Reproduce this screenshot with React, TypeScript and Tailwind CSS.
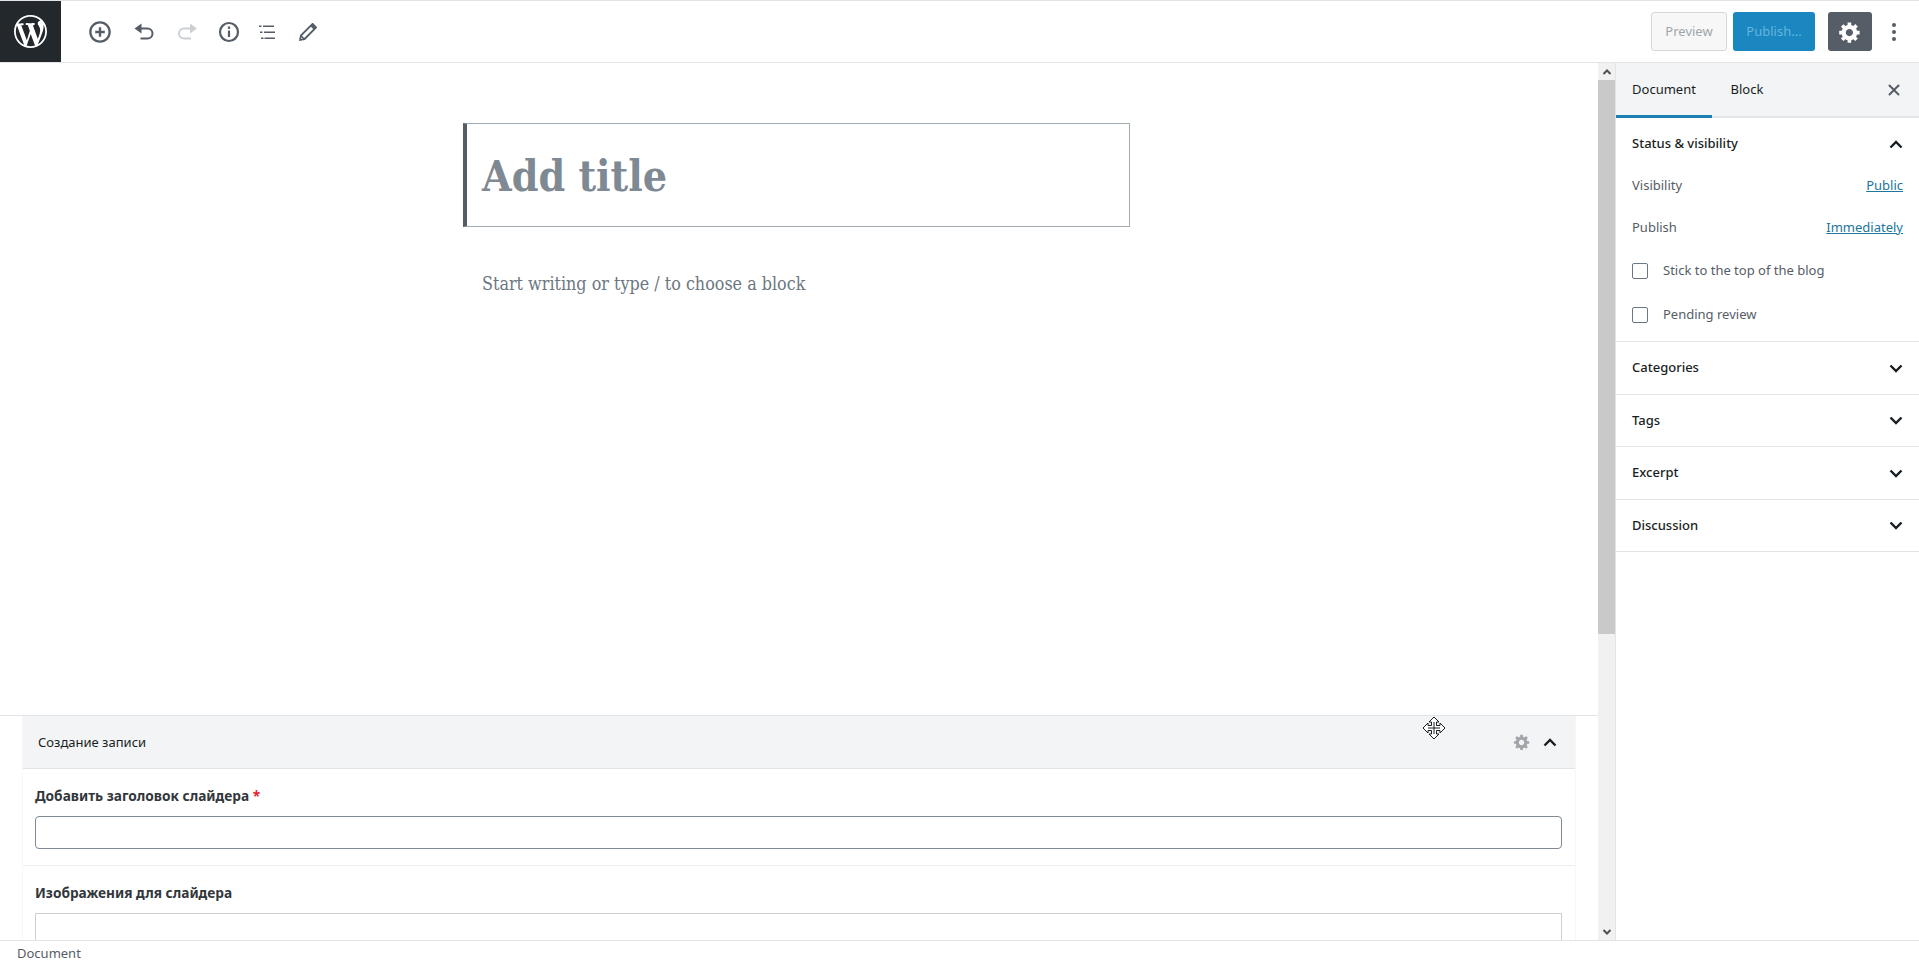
import { X } from "lucide-react"

const GEAR = "M18 12h-2.18c-.17.7-.44 1.35-.81 1.93l1.54 1.54-2.1 2.1-1.54-1.54c-.58.36-1.23.63-1.91.79V19H8v-2.18c-.68-.16-1.33-.43-1.91-.79l-1.54 1.54-2.12-2.12 1.54-1.54c-.36-.58-.63-1.23-.79-1.91H1V9.03h2.17c.16-.7.44-1.35.8-1.94L2.43 5.55l2.1-2.1 1.54 1.54c.58-.37 1.24-.64 1.93-.81V2h3v2.18c.68.16 1.33.43 1.91.79l1.54-1.54 2.12 2.12-1.54 1.54c.36.59.64 1.24.8 1.94H18V12zm-8.5 1.5c1.66 0 3-1.34 3-3s-1.34-3-3-3-3 1.34-3 3 1.34 3 3 3z"

function WpLogo() {
  return (
    <svg width="33" height="33" viewBox="0 0 20 20" fill="#fff">
      <path d="M20 10c0-5.51-4.49-10-10-10C4.48 0 0 4.49 0 10c0 5.52 4.48 10 10 10 5.51 0 10-4.48 10-10zM7.78 15.37L4.37 6.22c.55-.02 1.17-.08 1.17-.08.5-.06.44-1.13-.06-1.11 0 0-1.45.11-2.37.11-.18 0-.37 0-.58-.01C4.12 2.69 6.87 1.11 10 1.11c2.33 0 4.45.87 6.05 2.34-.68-.11-1.65.39-1.65 1.58 0 .74.45 1.36.9 2.1.35.61.55 1.36.55 2.46 0 1.49-1.4 5-1.4 5l-3.03-8.37c.54-.02.82-.17.82-.17.5-.05.44-1.25-.06-1.22 0 0-1.44.12-2.38.12-.87 0-2.33-.12-2.33-.12-.5-.03-.56 1.2-.06 1.22l.92.08 1.26 3.41zM17.41 10c.24-.64.74-1.87.43-4.25.7 1.29 1.05 2.71 1.05 4.25 0 3.29-1.73 6.24-4.4 7.78.97-2.59 1.94-5.2 2.92-7.78zM6.1 18.09C3.12 16.65 1.11 13.53 1.11 10c0-1.3.23-2.48.72-3.59C3.25 10.3 4.67 14.2 6.1 18.09zm4.03-6.63l2.58 6.98c-.86.29-1.76.45-2.71.45-.79 0-1.57-.11-2.29-.33.81-2.38 1.62-4.74 2.42-7.1z" />
    </svg>
  )
}

function Chevron({ up, size = 24, color = "#191e23" }: { up?: boolean; size?: number; color?: string }) {
  return (
    <svg width={size} height={size} viewBox="0 0 24 24" fill="none" stroke={color} strokeWidth="2.4">
      <path d={up ? "M6.5 15.5L12 10l5.500 5.500" : "M6.5 9.5L12 15l5.500-5.500"} />
    </svg>
  )
}

function Toolbar() {
  return (
    <div className="flex items-center ml-[17px] text-[#555d66]">
      <button className="w-[44px] h-[44px] flex items-center justify-center">
        <svg width="24" height="24" viewBox="0 0 20 20" fill="#555d66"><path d="M10 1c-5 0-9 4-9 9s4 9 9 9 9-4 9-9-4-9-9-9zm0 16c-3.9 0-7-3.1-7-7s3.1-7 7-7 7 3.1 7 7-3.1 7-7 7zm1-11H9v3H6v2h3v3h2v-3h3V9h-3V6z" /></svg>
      </button>
      <button className="w-[44px] h-[44px] flex items-center justify-center">
        <svg width="24" height="24" viewBox="0 0 24 24" fill="none" stroke="#555d66" strokeWidth="2">
          <path d="M2.500 8.500L9.500 3.500V13.500Z" fill="#555d66" stroke="none" />
          <path d="M8.500 8.500h7a5 5 0 0 1 0 10H8.500" />
        </svg>
      </button>
      <button className="w-[44px] h-[44px] flex items-center justify-center">
        <svg width="24" height="24" viewBox="0 0 24 24" fill="none" stroke="#ccd0d4" strokeWidth="2">
          <path d="M21 8.500L14 3.500V13.500Z" fill="#ccd0d4" stroke="none" />
          <path d="M15 8.500H8a5 5 0 0 0 0 10h7" />
        </svg>
      </button>
      <button className="w-[38px] h-[44px] flex items-center justify-center">
        <svg width="24" height="24" viewBox="0 0 24 24" fill="none" stroke="#555d66" strokeWidth="2.2">
          <circle cx="12" cy="12" r="9" />
          <path d="M12 10.500v6.500" />
          <path d="M12 6.500v2.400" />
        </svg>
      </button>
      <button className="w-[38px] h-[44px] flex items-center justify-center">
        <svg width="24" height="24" viewBox="0 0 24 24" fill="#555d66">
          <path d="M4 5.500h2.500V7H4zM8 5.500h11V7H8zM5 11.500h2.500V13H5zM9 11.500h11V13H9zM6 17.500h2.500V19H6zM9.500 17.500H20V19H9.500z" />
        </svg>
      </button>
      <button className="w-[44px] h-[44px] flex items-center justify-center">
        <svg width="24" height="24" viewBox="0 0 24 24" fill="#555d66">
          <path d="M17.500 3.500l3 3c.6.6.6 1.300.1 1.800L9 19.900 3 21l1.100-6L15.700 3.400c.5-.5 1.200-.5 1.800.1zM15 6.800L6 15.800l2.200 2.200 9-9zM5.500 17.200l-.4 1.700 1.700-.4z" fillRule="evenodd" />
        </svg>
      </button>
    </div>
  )
}

function Header() {
  return (
    <div className="h-[63px] shrink-0 flex items-center border-t border-b border-[#e2e4e7] bg-white">
      <div className="w-[61px] h-[61px] bg-[#23282d] flex items-center justify-center">
        <WpLogo />
      </div>
      <Toolbar />
      <div className="ml-auto flex items-center">
        <button className="w-[76px] h-[39px] rounded-[3px] border border-[#d5d7d9] bg-[#f7f7f7] text-[#a0a5aa] text-[13px]">Preview</button>
        <button className="ml-[6px] w-[82px] h-[39px] rounded-[3px] bg-[#1a87c0] text-[#66b5db] text-[13px]">Publish...</button>
        <button className="ml-[13px] w-[44px] h-[39px] rounded-[3px] bg-[#555d66] flex items-center justify-center">
          <svg width="24" height="24" viewBox="0 0 20 20" fill="#fff"><path d={GEAR} /></svg>
        </button>
        <button className="w-[44px] h-[44px] mr-[3px] flex items-center justify-center">
          <svg width="24" height="24" viewBox="0 0 24 24" fill="#555d66">
            <circle cx="12" cy="5" r="2" /><circle cx="12" cy="12" r="2" /><circle cx="12" cy="19" r="2" />
          </svg>
        </button>
      </div>
    </div>
  )
}

function MetaBox() {
  return (
    <div className="h-[225px] shrink-0 border-t border-[#e2e4e7] px-[22px] overflow-hidden">
      <div className="border-x border-[#f7f7f7] h-full">
        <div className="h-[53px] bg-[#f3f4f5] border-b border-[#e2e4e7] flex items-center pl-[15px] pr-[13px] text-[13px] text-[#191e23]">
          <span className="pt-[2px]">Создание записи</span>
          <svg className="ml-auto mr-[7px]" width="18" height="18" viewBox="0 0 20 20" fill="#a0a5aa"><path d={GEAR} /></svg>
          <Chevron up />
        </div>
        <div className="pl-[12px] pr-[13px] pt-[17px] pb-[16px] border-b border-[#eeeeee]">
          <div className="text-[13.7px] font-bold leading-[20px] text-[#32373c] mb-[10px]">
            Добавить заголовок слайдера <span className="text-[#e2242f]">*</span>
          </div>
          <div className="h-[33px] rounded-[4px] border border-[#7e8993] bg-white" />
        </div>
        <div className="pl-[12px] pr-[13px] pt-[17px]">
          <div className="text-[13.7px] font-bold leading-[20px] text-[#32373c] mb-[10px]">Изображения для слайдера</div>
          <div className="h-[60px] border border-[#ccd0d4]" />
        </div>
      </div>
    </div>
  )
}

function Scrollbar() {
  return (
    <div className="w-[17px] shrink-0 bg-[#f1f1f1] flex flex-col">
      <div className="h-[17px] flex items-center justify-center">
        <svg width="10" height="10" viewBox="0 0 10 10" fill="none" stroke="#505050" strokeWidth="2"><path d="M1.500 7L5 3.500 8.500 7" /></svg>
      </div>
      <div className="h-[554px] bg-[#c9c9c9]" />
      <div className="mt-auto h-[17px] flex items-center justify-center">
        <svg width="10" height="10" viewBox="0 0 10 10" fill="none" stroke="#505050" strokeWidth="2"><path d="M1.500 3L5 6.500 8.500 3" /></svg>
      </div>
    </div>
  )
}

function Check({ label }: { label: string }) {
  return (
    <div className="flex items-center h-[18px]">
      <span className="w-[16px] h-[16px] rounded-[2px] border-[1.5px] border-[#6c7781] bg-white" />
      <span className="ml-[15px] text-[13px] text-[#555d66]">{label}</span>
    </div>
  )
}

function ClosedPanel({ title }: { title: string }) {
  return (
    <div className="h-[52.5px] border-b border-[#e2e4e7] flex items-center pl-[16px] pr-[11px] text-[13px] font-medium text-[#191e23]">
      <span>{title}</span>
      <span className="ml-auto"><Chevron /></span>
    </div>
  )
}

function Sidebar() {
  return (
    <div className="w-[304px] shrink-0 border-l border-[#e2e4e7] bg-white flex flex-col">
      <div className="h-[55px] bg-[#f3f4f5] border-b-2 border-[#e2e4e7] flex text-[13px] text-[#191e23]">
        <div className="w-[96px] h-[55px] pt-[2px] border-b-[3px] border-[#1a7fb5] flex items-center justify-center">Document</div>
        <div className="ml-[9px] w-[52px] flex items-center justify-center h-[53px]">Block</div>
        <div className="ml-auto mr-[3px] w-[44px] h-[53px] flex items-center justify-center">
          <X size={18} strokeWidth={2.6} color="#555d66" />
        </div>
      </div>
      <div className="border-b border-[#e2e4e7] h-[224px] px-[16px] text-[13px]">
        <div className="h-[51px] flex items-center font-medium text-[#191e23]">
          <span>Status &amp; visibility</span>
          <span className="ml-auto -mr-[5px]"><Chevron up /></span>
        </div>
        <div className="h-[42px] -mt-[4px] flex items-center justify-between text-[#555d66]">
          <span>Visibility</span>
          <a className="underline text-[#21759b]">Public</a>
        </div>
        <div className="h-[42px] flex items-center justify-between text-[#555d66]">
          <span>Publish</span>
          <a className="underline text-[#21759b]">Immediately</a>
        </div>
        <div className="mt-[13px] flex flex-col gap-[26px]">
          <Check label="Stick to the top of the blog" />
          <Check label="Pending review" />
        </div>
      </div>
      <ClosedPanel title="Categories" />
      <ClosedPanel title="Tags" />
      <ClosedPanel title="Excerpt" />
      <ClosedPanel title="Discussion" />
    </div>
  )
}

export default function App() {
  return (
    <div className="relative h-[964px] w-[1919px] overflow-hidden flex flex-col bg-white font-['Noto_Sans',sans-serif]">
      <Header />
      <div className="flex-1 flex min-h-0">
        <div className="w-[1598px] shrink-0 flex flex-col">
          <div className="flex-1 pt-[60px] pl-[463px]">
            <div className="w-[667px] h-[104px] border border-[#a2aab2] border-l-4 border-l-[#555d66] pl-[15px] pt-[4px] flex items-center">
              <h1 className="font-['DejaVu_Serif',serif] [font-stretch:condensed] font-bold text-[42.5px] text-[#7e8993]">Add title</h1>
            </div>
            <p className="mt-[44px] pl-[19px] font-['DejaVu_Serif',serif] [font-stretch:condensed] text-[17.8px] text-[#6c7781]">Start writing or type / to choose a block</p>
          </div>
          <MetaBox />
        </div>
        <Scrollbar />
        <Sidebar />
      </div>
      <div className="h-[24px] shrink-0 border-t border-[#e2e4e7] pl-[17px] pt-[3px] flex items-center text-[13px] text-[#555d66]">Document</div>
      {/* mouse pointer */}
      <svg className="absolute left-[1422px] top-[716px]" width="24" height="24" viewBox="0 0 24 24" fill="#fff" stroke="#191e23" strokeWidth="1">
        <path d="M12 1l5 5h-2.500v3.500H18V7l5 5-5 5v-2.500h-3.500V18H17l-5 5-5-5h2.500v-3.500H6V17l-5-5 5-5v2.500h3.500V6H7z" />
        <path d="M12 6v12M6 12h12" fill="none" />
      </svg>
    </div>
  )
}
